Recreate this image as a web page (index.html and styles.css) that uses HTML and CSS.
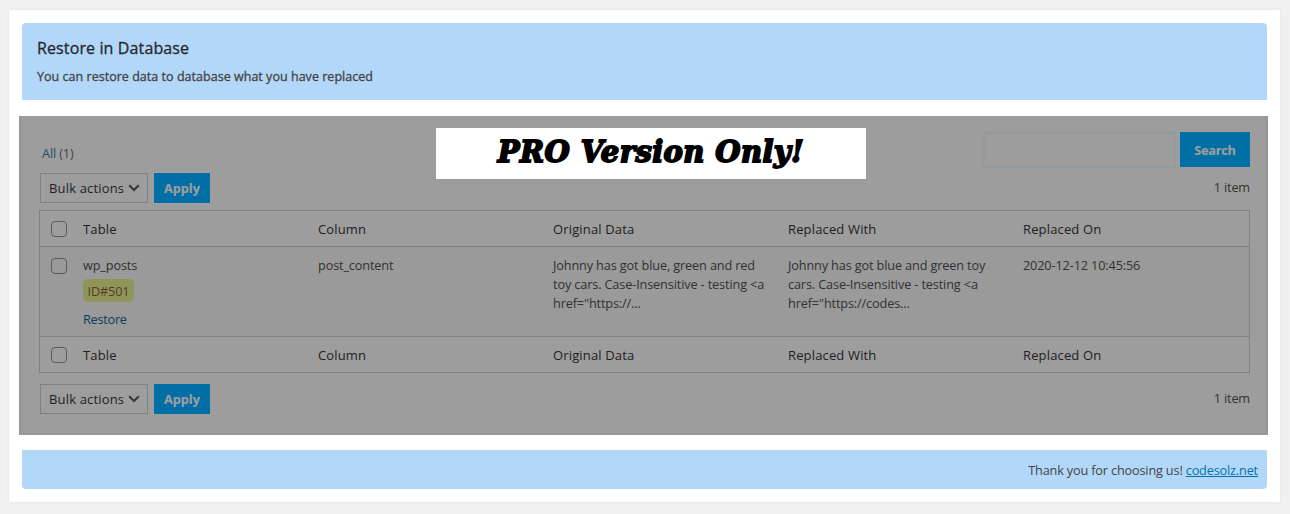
FILE: index.html
```html
<!DOCTYPE html>
<html lang="en">
<head>
<meta charset="utf-8">
<title>Restore in Database</title>
<link rel="stylesheet" href="styles.css">
</head>
<body>
<main class="card">
  <header class="intro">
    <h1>Restore in Database</h1>
    <p>You can restore data to database what you have replaced</p>
  </header>
  <section class="panel">
    <div class="top">
      <div class="filter"><a>All</a> (1)</div>
      <div class="search"><div class="field"></div><div class="btn btn-search">Search</div></div>
    </div>
    <div class="banner"><span>PRO Version Only!</span></div>
    <div class="nav">
      <div class="select"><span>Bulk actions</span><svg width="12" height="8" viewBox="0 0 12 8"><path d="M1.2 1.2 6 6l4.8-4.8" /></svg></div>
      <div class="btn">Apply</div>
      <div class="count">1 item</div>
    </div>
    <div class="table">
      <div class="row head"><i class="box"></i><span>Table</span><span>Column</span><span>Original Data</span><span>Replaced With</span><span>Replaced On</span></div>
      <div class="row data"><i class="box"></i>
        <div class="name"><div>wp_posts</div><div class="tag">ID#501</div><a>Restore</a></div>
        <span class="post">post_content</span>
        <span>Johnny has got blue, green and red<br>toy cars. Case-Insensitive - testing &lt;a<br>href="https://...</span>
        <span>Johnny has got blue and green toy<br>cars. Case-Insensitive - testing &lt;a<br>href="https://codes...</span>
        <span class="date">2020-12-12 10:45:56</span>
      </div>
      <div class="row head"><i class="box"></i><span>Table</span><span>Column</span><span>Original Data</span><span>Replaced With</span><span>Replaced On</span></div>
    </div>
    <div class="nav nav-bottom">
      <div class="select"><span>Bulk actions</span><svg width="12" height="8" viewBox="0 0 12 8"><path d="M1.2 1.2 6 6l4.8-4.8" /></svg></div>
      <div class="btn">Apply</div>
      <div class="count">1 item</div>
    </div>
  </section>
  <footer class="foot">Thank you for choosing us!&nbsp;<a>codesolz.net</a></footer>
</main>
</body>
</html>
```
FILE: styles.css
```css
* { box-sizing: border-box; }
body {
  margin: 0;
  padding: 8px 8px 10px 7px;
  height: 514px;
  overflow: hidden;
  background: #f0f0f0;
  color: #444;
  font: 12.7px/19px "Open Sans", "Noto Sans", sans-serif;
  letter-spacing: -0.13px;
  white-space: nowrap;
}
.card {
  height: 496px;
  border: 2px solid #f0ebec;
  border-radius: 4px;
  background: #fff;
  padding: 13px;
}
.intro {
  height: 77px;
  background: #b3d7f8;
  border-radius: 4px 4px 0 0;
  padding: 14px 15px;
}
h1 {
  margin: 0;
  font-size: 16px;
  line-height: 22px;
  font-weight: 500;
  color: #23282d;
  letter-spacing: 0.12px;
  -webkit-text-stroke: 0.3px #23282d;
}
.intro p {
  margin: 8px 0 0;
  font-size: 12.5px;
  line-height: 19px;
  font-weight: 500;
  letter-spacing: 0.03px;
  -webkit-text-stroke: 0.3px #444;
}
.panel {
  position: relative;
  height: 319px;
  margin: 16px -1px 15px -3px;
  border: solid #94999e;
  border-width: 0 3px 2px;
  background: #9d9d9d;
  padding: 16px 15px 0 17px;
  color: #313131;
}
.top { display: flex; justify-content: space-between; height: 41px; }
.filter { padding: 12px 0 0 3px; color: #444; }
.filter a { color: #1d4f6e; }
.search { display: flex; gap: 4px; }
.field { width: 193px; height: 36px; border: 2px solid #959a9f; background: #9d9d9d; }
.btn {
  width: 56px;
  height: 30px;
  background: #006fa5;
  color: #9d9d9d;
  font-weight: 700;
  line-height: 30px;
  text-align: center;
  letter-spacing: 0;
  -webkit-text-stroke: 0.2px #9d9d9d;
}
.btn-search { width: 70px; height: 35px; line-height: 36px; letter-spacing: -0.25px; }
.banner {
  position: absolute;
  left: 414px;
  top: 12px;
  width: 430px;
  height: 51px;
  background: #fff;
  color: #000;
  font: italic 900 29px/49px "DejaVu Serif", serif;
  letter-spacing: 0.4px;
  text-align: center;
  -webkit-text-stroke: 1.8px #000;
}
.nav { display: flex; height: 30px; padding-left: 1px; }
.nav-bottom { margin-top: 11px; }
.select {
  display: flex;
  align-items: center;
  justify-content: space-between;
  width: 108px;
  margin-right: 6px;
  padding: 0 7px 0 8px;
  border: 1px solid #7e8084;
  color: #1f2225;
  font-size: 13px;
  letter-spacing: 0.16px;
}
.select path { fill: none; stroke: #35373a; stroke-width: 2; }
.count { margin-left: auto; line-height: 28px; }
.table { margin-top: 7px; height: 163px; border: 1px solid #7e8084; }
.row { display: grid; grid-template-columns: 43px repeat(4, 235px) 1fr; height: 36px; }
.row + .row { border-top: 1px solid #7e8084; }
.head { color: #1d2023; font-size: 13px; line-height: 36px; letter-spacing: 0.15px; }
.head:first-child { height: 35px; }
.head + .data { height: 90px; }
.box { width: 16px; height: 16px; margin: 10px 0 0 11px; border: 1px solid #575b61; border-radius: 4px; }
.data { background: #9a9a9a; line-height: 19px; }
.data > div, .data > span { padding-top: 9px; }
.data .box { margin-top: 11px; }
.tag {
  width: 51px;
  height: 23px;
  margin: 4px 0 8px;
  border-radius: 5px;
  background: #8f9459;
  color: #573c24;
  line-height: 24px;
  text-align: center;
  font-size: 12.7px;
}
.name a { display: block; color: #073f5c; letter-spacing: -0.25px; }
.foot {
  display: flex;
  justify-content: flex-end;
  height: 39px;
  padding-right: 9px;
  border-radius: 0 0 4px 4px;
  background: #b3d7f8;
  line-height: 41px;
  letter-spacing: -0.16px;
}
.foot a { color: #0073aa; text-decoration: underline; }
```
